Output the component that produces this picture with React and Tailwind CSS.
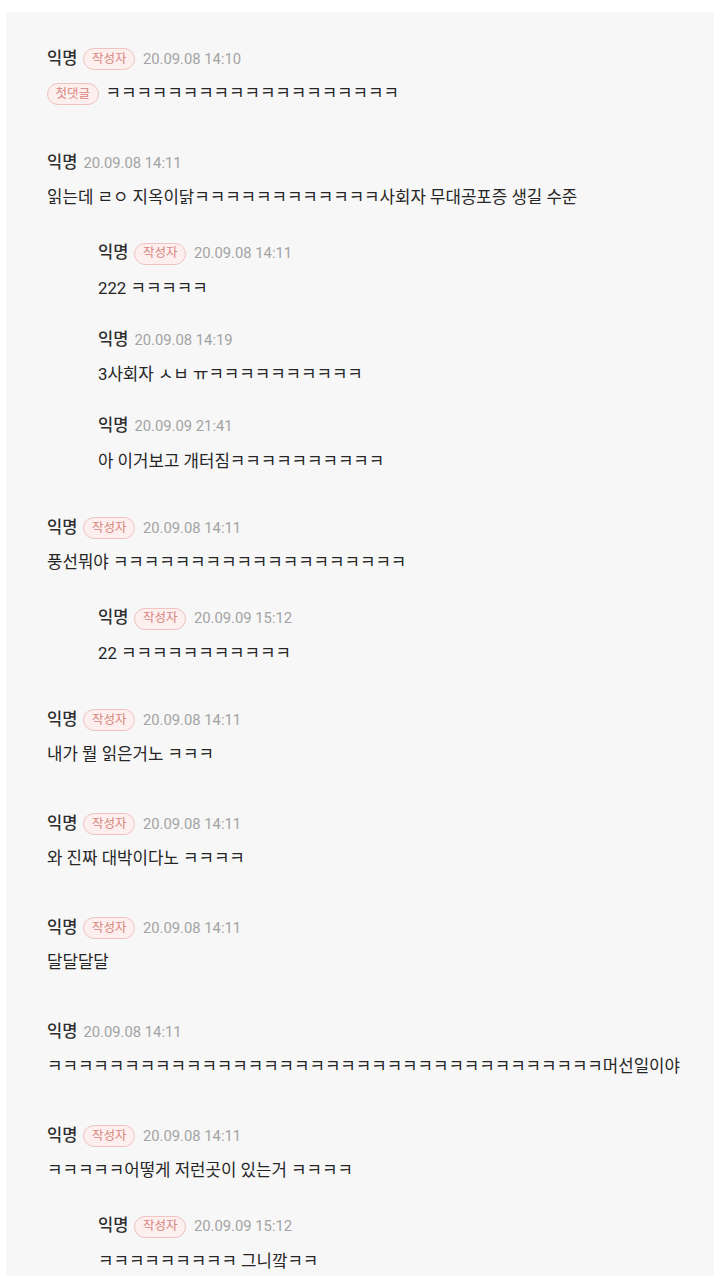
import React from "react";

const K = (n) => "ㅋ".repeat(n);

// --- Small pill badge (작성자 / 첫댓글) ---
const Badge = ({ children }) => (
  <span className="inline-flex items-center justify-center h-[22px] px-[7.5px] rounded-full border border-[#efc3bf] bg-[#fcefee] text-[12.5px] leading-none text-[#d9857e]">
    {children}
  </span>
);

// --- One comment: header row + body ---
const Comment = ({ author, date, first, text, reply }) => (
  <div className={reply ? "pl-[51px]" : ""}>
    <div className="flex items-center h-6 gap-[6px]">
      <span className="text-[16.5px] font-medium text-[#2f2f2f]">익명</span>
      {author && <Badge>작성자</Badge>}
      <span className={`text-[14.8px] text-[#a3a3a3] ${author ? "ml-[2px]" : ""}`}>
        {date}
      </span>
    </div>
    <div className="mt-[11px] flex items-center h-6 gap-[7px]">
      {first && <Badge>첫댓글</Badge>}
      <span className="text-[16.8px] text-[#262626] whitespace-nowrap">{text}</span>
    </div>
  </div>
);

const threads = [
  {
    top: { author: true, date: "20.09.08 14:10", first: true, text: K(19) },
    replies: [],
  },
  {
    top: {
      date: "20.09.08 14:11",
      text: `읽는데 ㄹㅇ 지옥이닭${K(12)}사회자 무대공포증 생길 수준`,
    },
    replies: [
      { author: true, date: "20.09.08 14:11", text: `222 ${K(5)}` },
      { date: "20.09.08 14:19", text: `3사회자 ㅅㅂ ㅠ${K(10)}` },
      { date: "20.09.09 21:41", text: `아 이거보고 개터짐${K(10)}` },
    ],
  },
  {
    top: { author: true, date: "20.09.08 14:11", text: `풍선뭐야 ${K(19)}` },
    replies: [{ author: true, date: "20.09.09 15:12", text: `22 ${K(11)}` }],
  },
  {
    top: { author: true, date: "20.09.08 14:11", text: `내가 뭘 읽은거노 ${K(3)}` },
    replies: [],
  },
  {
    top: { author: true, date: "20.09.08 14:11", text: `와 진짜 대박이다노 ${K(4)}` },
    replies: [],
  },
  {
    top: { author: true, date: "20.09.08 14:11", text: "달달달달" },
    replies: [],
  },
  {
    top: { date: "20.09.08 14:11", text: `${K(36)}머선일이야` },
    replies: [],
  },
  {
    top: {
      author: true,
      date: "20.09.08 14:11",
      text: `${K(5)}어떻게 저런곳이 있는거 ${K(4)}`,
    },
    replies: [{ author: true, date: "20.09.09 15:12", text: `${K(9)} 그니깤ㅋㅋ` }],
  },
];

export default function App() {
  return (
    <div
      className="w-[714px] h-[1276px] overflow-hidden bg-white pt-[12px] pl-[6px]"
      style={{ fontFamily: 'Roboto, "Noto Sans CJK KR", sans-serif' }}
    >
      <div className="h-full bg-[#f7f7f7] pt-[35px] pl-[41px] flex flex-col gap-[45px]">
        {threads.map((t, i) => (
          <div key={i}>
            <Comment {...t.top} />
            {t.replies.length > 0 && (
              <div className="mt-[31.5px] -mb-[2.5px] flex flex-col gap-[27.5px]">
                {t.replies.map((r, j) => (
                  <Comment key={j} reply {...r} />
                ))}
              </div>
            )}
          </div>
        ))}
      </div>
    </div>
  );
}
